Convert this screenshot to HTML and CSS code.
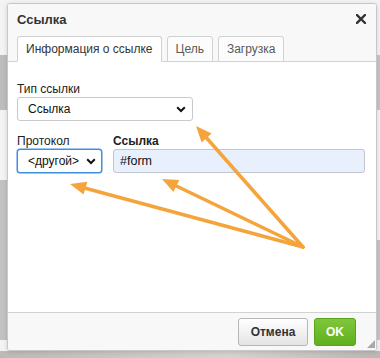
FILE: index.html
```html
<!DOCTYPE html>
<html lang="ru">
<head>
<meta charset="utf-8">
<title>Ссылка</title>
<link rel="stylesheet" href="styles.css">
</head>
<body>
<div class="dialog">
  <div class="title-bar">
    <span class="title">Ссылка</span>
    <span class="close" aria-label="Закрыть">
      <svg width="10" height="10" viewBox="0 0 10 10"><path d="M1 1L9 9M9 1L1 9" stroke="#333" stroke-width="2.4" stroke-linecap="square"/></svg>
    </span>
  </div>
  <div class="tabs">
    <div class="tab active">Информация о ссылке</div>
    <div class="tab">Цель</div>
    <div class="tab">Загрузка</div>
  </div>
  <div class="body">
    <div class="field">
      <label class="label">Тип ссылки</label>
      <div class="select select-type">
        <span>Ссылка</span>
        <svg class="chev" width="10" height="7" viewBox="0 0 10 7"><path d="M1.2 1.3L5 5L8.8 1.3" fill="none" stroke="#111" stroke-width="2"/></svg>
      </div>
    </div>
    <div class="row">
      <div class="field">
        <label class="label">Протокол</label>
        <div class="select select-proto focused">
          <span>&lt;другой&gt;</span>
          <svg class="chev" width="10" height="7" viewBox="0 0 10 7"><path d="M1.2 1.3L5 5L8.8 1.3" fill="none" stroke="#111" stroke-width="2"/></svg>
        </div>
      </div>
      <div class="field grow">
        <label class="label bold">Ссылка</label>
        <div class="input">#form</div>
      </div>
    </div>
  </div>
  <div class="footer">
    <button class="btn cancel">Отмена</button>
    <button class="btn ok">OK</button>
    <span class="resize"></span>
  </div>
</div>
<svg class="arrows" width="380" height="358" viewBox="0 0 380 358">
  <g stroke="#f5a43c" stroke-width="3.5" stroke-linecap="round" fill="none">
    <line x1="303" y1="247" x2="206.6" y2="138"/>
    <line x1="303" y1="247" x2="176.4" y2="186"/>
    <line x1="303" y1="247" x2="85.4" y2="188.2"/>
  </g>
  <g fill="#f5a43c">
    <polygon points="196,126 211.6,133.6 201.6,142.4"/>
    <polygon points="162,179 179.4,180 173.4,191.9"/>
    <polygon points="70,184 87.3,181.8 83.5,194.6"/>
  </g>
</svg>
</body>
</html>
```
FILE: styles.css
```css
* { box-sizing: border-box; }
html, body { margin: 0; padding: 0; }
body {
  width: 380px;
  height: 358px;
  overflow: hidden;
  position: relative;
  font-family: "Liberation Sans", Arial, Helvetica, sans-serif;
  font-size: 12px;
  color: #333;
  padding: 3px 3px 0 7px;
  background:
    linear-gradient(to bottom, transparent 55px, #bdbdbd 55px, #bdbdbd 110px, transparent 110px, transparent 180px, #c2c2c2 180px, #c2c2c2 340px, transparent 340px) left top / 7px 100% no-repeat,
    linear-gradient(to bottom, transparent 55px, #c6c6c6 55px, #c6c6c6 110px, transparent 110px, transparent 240px, #c6c6c6 240px, #c6c6c6 340px, transparent 340px) right top / 3px 100% no-repeat,
    linear-gradient(to right, #bdbab6, #c9c6c2 30%, #d6d3cf 60%, #bbb8b4) left bottom / 100% 7px no-repeat,
    #f3f3f3;
}
.dialog {
  width: 370px;
  height: 348px;
  border: 1px solid #c8c8c8;
  border-radius: 3px;
  background: #fff;
  display: flex;
  flex-direction: column;
  box-shadow: 0 1px 4px rgba(0,0,0,0.15);
  overflow: hidden;
}
.title-bar {
  height: 29px;
  flex: none;
  background: #f8f8f8;
  display: flex;
  align-items: center;
  justify-content: space-between;
  padding: 0 10px 0 9px;
}
.title {
  font-weight: bold;
  font-size: 13px;
  color: #333;
  margin-top: 1px;
}
.close { display: flex; margin-top: 1px; }
.tabs {
  height: 29px;
  flex: none;
  background: #f8f8f8;
  border-bottom: 1px solid #d1d1d1;
  display: flex;
  align-items: flex-end;
  gap: 5px;
  padding: 0 9px;
}
.tab {
  height: 26px;
  margin-bottom: -1px;
  border: 1px solid #d1d1d1;
  border-radius: 3px 3px 0 0;
  background: #fcfcfc;
  color: #595959;
  padding: 0 8px;
  display: flex;
  align-items: center;
  line-height: 1;
}
.tab.active {
  background: #fff;
  color: #333;
  border-bottom-color: #fff;
}
.body {
  flex: 1;
  padding: 20px 10px 0 9px;
  display: flex;
  flex-direction: column;
  gap: 13px;
}
.field { display: flex; flex-direction: column; }
.field.grow { flex: 1; }
.label { line-height: 15px; color: #222; }
.label.bold { font-weight: bold; }
.row { display: flex; gap: 11px; }
.select {
  height: 24px;
  border: 1px solid #c9c9c9;
  border-radius: 3px;
  background: #fff;
  display: flex;
  align-items: center;
  justify-content: space-between;
  padding: 0 6px 0 10px;
  color: #111;
}
.select-type { width: 176px; }
.select-proto { width: 85px; padding-right: 5px; }
.select.focused {
  border: 1px solid #3d8fe0;
  box-shadow: 0 0 0 0.5px #3d8fe0;
}
.chev { flex: none; }
.input {
  height: 24px;
  border: 1px solid #c2c6cc;
  border-radius: 3px;
  background: #e8f0fe;
  display: flex;
  align-items: center;
  padding: 0 6px;
  color: #111;
  font-size: 12.5px;
  margin-right: 1px;
}
.footer {
  height: 38px;
  flex: none;
  border-top: 1px solid #d1d1d1;
  background: #f8f8f8;
  display: flex;
  align-items: flex-start;
  justify-content: flex-end;
  padding: 5px 20px 0 0;
  gap: 6px;
  position: relative;
}
.btn {
  height: 28px;
  border-radius: 3px;
  font-family: "Liberation Sans", Arial, Helvetica, sans-serif;
  font-size: 12px;
  font-weight: bold;
  padding: 0;
  cursor: pointer;
}
.cancel {
  width: 70px;
  border: 1px solid #b6b6b6;
  background: linear-gradient(#fff, #e4e4e4);
  color: #333;
}
.ok {
  width: 42px;
  border: 1px solid #5aa317;
  background: linear-gradient(#7ec73a, #60b01e);
  color: #fff;
}
.resize {
  position: absolute;
  right: 1px;
  bottom: 2px;
  width: 0;
  height: 0;
  border-left: 8px solid transparent;
  border-bottom: 8px solid #a9a9a9;
}
.arrows {
  position: absolute;
  left: 0;
  top: 0;
  pointer-events: none;
}
```
